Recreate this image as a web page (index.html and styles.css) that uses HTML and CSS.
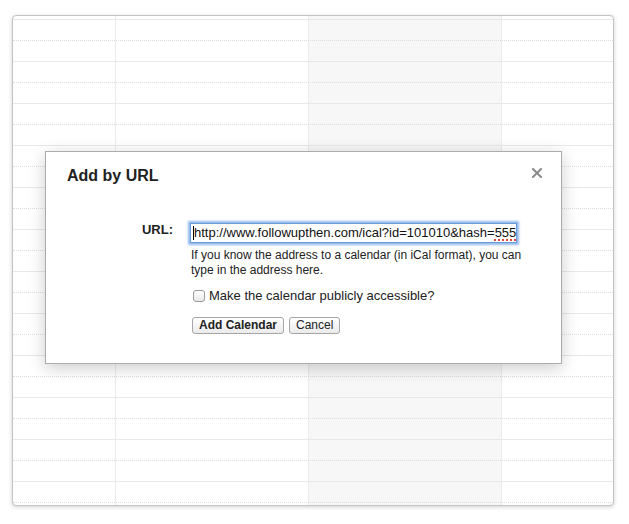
FILE: index.html
```html
<!DOCTYPE html>
<html lang="en">
<head>
<meta charset="utf-8">
<title>Add by URL</title>
<link rel="stylesheet" href="styles.css">
</head>
<body>
<div class="page">
  <div class="calendar">
    <div class="grid">
      <div class="row"><div class="cell"></div><div class="cell"></div><div class="cell today"></div><div class="cell last"></div></div>
      <div class="row"><div class="cell"></div><div class="cell"></div><div class="cell today"></div><div class="cell last"></div></div>
      <div class="row"><div class="cell"></div><div class="cell"></div><div class="cell today"></div><div class="cell last"></div></div>
      <div class="row"><div class="cell"></div><div class="cell"></div><div class="cell today"></div><div class="cell last"></div></div>
      <div class="row"><div class="cell"></div><div class="cell"></div><div class="cell today"></div><div class="cell last"></div></div>
      <div class="row"><div class="cell"></div><div class="cell"></div><div class="cell today"></div><div class="cell last"></div></div>
      <div class="row"><div class="cell"></div><div class="cell"></div><div class="cell today"></div><div class="cell last"></div></div>
      <div class="row"><div class="cell"></div><div class="cell"></div><div class="cell today"></div><div class="cell last"></div></div>
      <div class="row"><div class="cell"></div><div class="cell"></div><div class="cell today"></div><div class="cell last"></div></div>
      <div class="row"><div class="cell"></div><div class="cell"></div><div class="cell today"></div><div class="cell last"></div></div>
      <div class="row"><div class="cell"></div><div class="cell"></div><div class="cell today"></div><div class="cell last"></div></div>
      <div class="row"><div class="cell"></div><div class="cell"></div><div class="cell today"></div><div class="cell last"></div></div>
      <div class="row"><div class="cell"></div><div class="cell"></div><div class="cell today"></div><div class="cell last"></div></div>
    </div>
  </div>

  <div class="dialog" role="dialog" aria-label="Add by URL">
    <h2 class="dialog-title">Add by URL</h2>
    <button class="close" aria-label="Close">
      <svg width="10" height="10" viewBox="0 0 10 10"><path d="M1 1L9 9M9 1L1 9" stroke="#8a8a8a" stroke-width="2" stroke-linecap="square"/></svg>
    </button>
    <div class="form">
      <label class="form-label">URL:</label>
      <div class="form-fields">
        <div class="field"><span class="caret"></span>http://www.followupthen.com/ical?id=101010&amp;hash=<span class="misspelled">555</span></div>
        <p class="help">If you know the address to a calendar (in iCal format), you can<br>type in the address here.</p>
        <label class="check-row"><input type="checkbox" class="check"><span>Make the calendar publicly accessible?</span></label>
        <div class="actions">
          <button class="btn btn-primary">Add Calendar</button>
          <button class="btn">Cancel</button>
        </div>
      </div>
    </div>
  </div>
</div>
</body>
</html>
```

FILE: styles.css
```css
* { box-sizing: border-box; }

html, body {
  margin: 0;
  padding: 0;
  background: #ffffff;
}

body {
  font-family: "Liberation Sans", Arial, Helvetica, sans-serif;
  color: #222222;
}

.page {
  position: relative;
  width: 629px;
  height: 524px;
  overflow: hidden;
  padding-top: 15px;
  padding-left: 12px;
}

.calendar {
  width: 602px;
  height: 491px;
  border: 1px solid #c4c4c4;
  border-radius: 4px;
  box-shadow: 0 1px 4px rgba(0, 0, 0, 0.18);
  overflow: hidden;
  background: #ffffff;
}

.grid {
  margin-top: -38px;
}

.row {
  position: relative;
  display: grid;
  grid-template-columns: 103px 193px 193px 1fr;
  height: 42px;
  border-bottom: 1px solid #e9e9e9;
}

.row::before {
  content: "";
  position: absolute;
  left: 0;
  right: 0;
  top: 20px;
  border-top: 1px dotted #dedede;
}

.cell {
  border-right: 1px solid #ebebeb;
}

.cell.today {
  background: #f7f7f7;
}

.cell.last {
  border-right: none;
}

.dialog {
  position: absolute;
  left: 45px;
  top: 151px;
  width: 517px;
  height: 213px;
  background: #ffffff;
  border: 1px solid #acacac;
  box-shadow: 0 4px 16px rgba(0, 0, 0, 0.2);
}

.dialog-title {
  margin: 14px 0 0 21px;
  font-size: 16px;
  line-height: 20px;
  font-weight: bold;
  color: #222222;
}

.close {
  position: absolute;
  left: 486px;
  top: 16px;
  width: 10px;
  height: 10px;
  padding: 0;
  border: none;
  background: none;
  display: block;
}

.close svg { display: block; }

.form {
  display: grid;
  grid-template-columns: 127px 1fr;
  column-gap: 17px;
  align-items: start;
  margin-top: 37px;
}

.form-label {
  text-align: right;
  font-size: 13px;
  line-height: 13px;
  font-weight: bold;
  color: #222222;
}

.form-fields {
  display: flex;
  flex-direction: column;
  align-items: flex-start;
}

.field {
  width: 327px;
  height: 20px;
  border: 1px solid #6b9bd8;
  box-shadow: 0 0 2px 2px #94bbec;
  padding-left: 2px;
  font-size: 13px;
  line-height: 18px;
  white-space: nowrap;
  overflow: hidden;
  color: #111111;
  background: #ffffff;
}

.caret {
  display: inline-block;
  width: 1px;
  height: 14px;
  background: #000000;
  vertical-align: -3px;
}

.misspelled {
  text-decoration-line: underline;
  text-decoration-style: dotted;
  text-decoration-color: #e4463c;
  text-decoration-thickness: 2px;
  text-underline-offset: 2px;
}

.help {
  margin: 5px 0 0 1px;
  font-size: 12px;
  line-height: 14.5px;
  color: #222222;
  white-space: nowrap;
}

.check-row {
  display: flex;
  align-items: center;
  margin-top: 11px;
  font-size: 13px;
  line-height: 16px;
  color: #222222;
}

.check {
  appearance: none;
  -webkit-appearance: none;
  width: 12px;
  height: 12px;
  margin: 0 4px 0 3px;
  border: 1px solid #9a9a9a;
  border-radius: 3px;
  background: linear-gradient(#ffffff, #e9e9e9);
}

.actions {
  display: flex;
  gap: 5px;
  margin-top: 13px;
  margin-left: 2px;
}

.btn {
  height: 17px;
  padding: 0 6px;
  font-family: "Liberation Sans", Arial, Helvetica, sans-serif;
  font-size: 12px;
  line-height: 15px;
  color: #222222;
  border: 1px solid #a6a6a6;
  border-radius: 3px;
  background: linear-gradient(#ffffff, #ebebeb);
}

.btn-primary {
  font-weight: bold;
}
```
